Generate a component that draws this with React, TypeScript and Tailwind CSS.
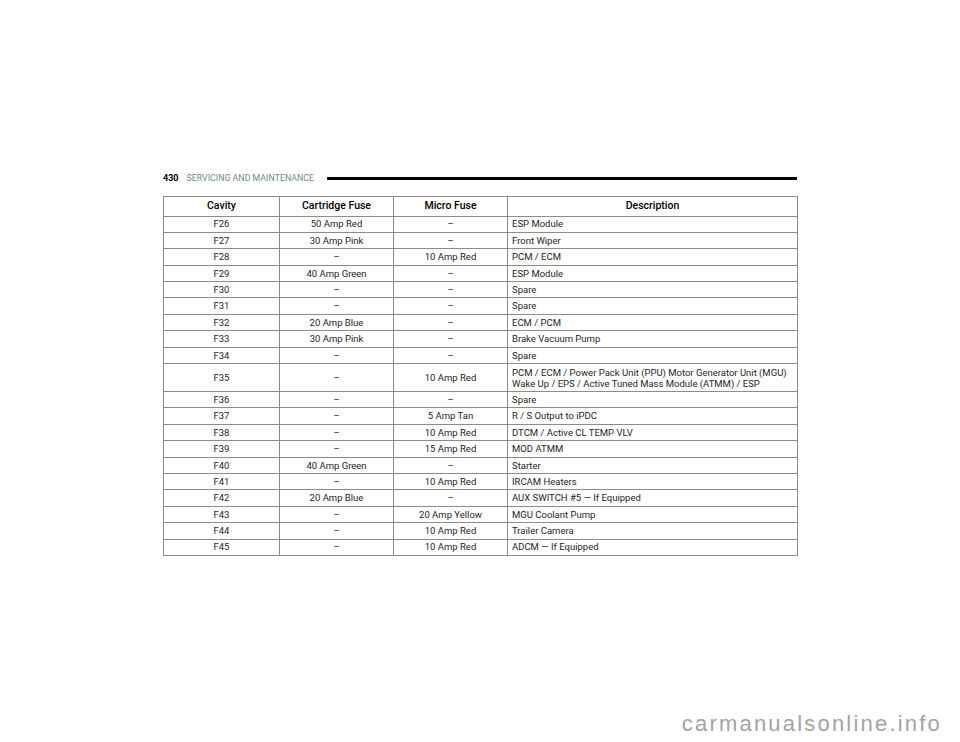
type Row = {
    cavity: string;
    cartridge: string;
    micro: string;
    desc: string[];
};

const rows: Row[] = [
    { cavity: "F26", cartridge: "50 Amp Red", micro: "–", desc: ["ESP Module"] },
    { cavity: "F27", cartridge: "30 Amp Pink", micro: "–", desc: ["Front Wiper"] },
    { cavity: "F28", cartridge: "–", micro: "10 Amp Red", desc: ["PCM / ECM"] },
    { cavity: "F29", cartridge: "40 Amp Green", micro: "–", desc: ["ESP Module"] },
    { cavity: "F30", cartridge: "–", micro: "–", desc: ["Spare"] },
    { cavity: "F31", cartridge: "–", micro: "–", desc: ["Spare"] },
    { cavity: "F32", cartridge: "20 Amp Blue", micro: "–", desc: ["ECM / PCM"] },
    { cavity: "F33", cartridge: "30 Amp Pink", micro: "–", desc: ["Brake Vacuum Pump"] },
    { cavity: "F34", cartridge: "–", micro: "–", desc: ["Spare"] },
    {
        cavity: "F35",
        cartridge: "–",
        micro: "10 Amp Red",
        desc: [
            "PCM / ECM / Power Pack Unit (PPU) Motor Generator Unit (MGU)",
            "Wake Up / EPS / Active Tuned Mass Module (ATMM) / ESP",
        ],
    },
    { cavity: "F36", cartridge: "–", micro: "–", desc: ["Spare"] },
    { cavity: "F37", cartridge: "–", micro: "5 Amp Tan", desc: ["R / S Output to iPDC"] },
    { cavity: "F38", cartridge: "–", micro: "10 Amp Red", desc: ["DTCM / Active CL TEMP VLV"] },
    { cavity: "F39", cartridge: "–", micro: "15 Amp Red", desc: ["MOD ATMM"] },
    { cavity: "F40", cartridge: "40 Amp Green", micro: "–", desc: ["Starter"] },
    { cavity: "F41", cartridge: "–", micro: "10 Amp Red", desc: ["IRCAM Heaters"] },
    { cavity: "F42", cartridge: "20 Amp Blue", micro: "–", desc: ["AUX SWITCH #5 — If Equipped"] },
    { cavity: "F43", cartridge: "–", micro: "20 Amp Yellow", desc: ["MGU Coolant Pump"] },
    { cavity: "F44", cartridge: "–", micro: "10 Amp Red", desc: ["Trailer Camera"] },
    { cavity: "F45", cartridge: "–", micro: "10 Amp Red", desc: ["ADCM — If Equipped"] },
];

function App() {
    return (
        <div className="flex flex-col h-[742px] w-[960px] bg-white font-['Roboto','Liberation_Sans',sans-serif] text-[#1e1e1e]">
            <div className="mx-auto w-[634px] pt-[173px]">
                {/* page header */}
                <div className="flex items-center h-[11px]">
                    <span className="text-[9px] font-bold text-black leading-none">430</span>
                    <span className="ml-[8px] text-[8.8px] text-[#6f8a85] leading-none">
                        SERVICING AND MAINTENANCE
                    </span>
                    <div className="ml-[13px] flex-1 h-[3px] bg-black"></div>
                </div>

                <table className="mt-[12px] w-full table-fixed border-collapse border border-[#8c8c8c]">
                    <colgroup>
                        <col className="w-[116px]" />
                        <col className="w-[114px]" />
                        <col className="w-[114px]" />
                        <col className="w-[290px]" />
                    </colgroup>
                    <thead>
                        <tr className="h-[19.5px] text-[10.5px] text-black">
                            <th className="border border-[#8c8c8c] font-medium text-center">Cavity</th>
                            <th className="border border-[#8c8c8c] font-medium text-center">Cartridge Fuse</th>
                            <th className="border border-[#8c8c8c] font-medium text-center">Micro Fuse</th>
                            <th className="border border-[#8c8c8c] font-medium text-center">Description</th>
                        </tr>
                    </thead>
                    <tbody className="text-[9.5px]">
                        {rows.map((row) => {
                            const multi = row.desc.length > 1;
                            return (
                                <tr key={row.cavity} className={multi ? "h-[28px]" : "h-[16.4px]"}>
                                    <td className="border border-[#8c8c8c] text-center leading-none">{row.cavity}</td>
                                    <td className="border border-[#8c8c8c] text-center leading-none">{row.cartridge}</td>
                                    <td className="border border-[#8c8c8c] text-center leading-none">{row.micro}</td>
                                    <td className={multi ? "border border-[#8c8c8c] pl-[4px] leading-[11px]" : "border border-[#8c8c8c] pl-[4px] leading-none"}>
                                        {row.desc.map((line) => (
                                            <div key={line}>{line}</div>
                                        ))}
                                    </td>
                                </tr>
                            );
                        })}
                    </tbody>
                </table>
            </div>

            <div className="mt-auto flex justify-end pr-[18px] pb-[7px]">
                <span className="font-['Liberation_Sans',sans-serif] text-[22px] tracking-[2.2px] text-[#a3a3a3] leading-none">
                    carmanualsonline.info
                </span>
            </div>
        </div>
    );
}

export default App;
